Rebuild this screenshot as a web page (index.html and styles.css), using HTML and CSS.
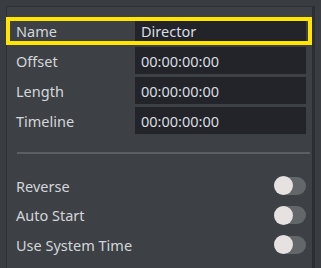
FILE: index.html
```html
<!DOCTYPE html>
<html lang="en">
<head>
    <meta charset="UTF-8">
    <title>Director Properties</title>
    <link rel="stylesheet" href="styles.css">
</head>
<body>
    <div class="panel">
        <div class="fields">
            <div class="row selected">
                <label for="name">Name</label>
                <input type="text" id="name" value="Director">
            </div>
            <div class="row">
                <label for="offset">Offset</label>
                <input type="text" id="offset" value="00:00:00:00">
            </div>
            <div class="row">
                <label for="length">Length</label>
                <input type="text" id="length" value="00:00:00:00">
            </div>
            <div class="row">
                <label for="timeline">Timeline</label>
                <input type="text" id="timeline" value="00:00:00:00">
            </div>
        </div>

        <hr class="divider">

        <div class="switches">
            <div class="switch-row">
                <span>Reverse</span>
                <span class="toggle"><span class="knob"></span></span>
            </div>
            <div class="switch-row">
                <span>Auto Start</span>
                <span class="toggle"><span class="knob"></span></span>
            </div>
            <div class="switch-row">
                <span>Use System Time</span>
                <span class="toggle"><span class="knob"></span></span>
            </div>
        </div>
    </div>
</body>
</html>
```

FILE: styles.css
```css
html, body {
    margin: 0;
    height: 100%;
    overflow: hidden;
}
body {
    font-family: "Noto Sans", "Open Sans", sans-serif;
    font-size: 14.5px;
    background-color: #393c41;
    padding: 6px 0 0 6px;
    box-sizing: border-box;
}
.panel {
    width: 309px;
    height: 100%;
    box-sizing: border-box;
    background-color: #3d4045;
    border-top: 1px solid #2d3034;
    border-left: 1px solid #2d3034;
    border-right: 3px solid #2c2e32;
    padding-top: 10px;
}
.fields {
    display: flex;
    flex-direction: column;
    gap: 3px;
    margin-left: -1px;
}
.row {
    display: flex;
    align-items: center;
    height: 27px;
    padding-right: 6px;
    color: #d3d7da;
}
.row label {
    flex: 1;
    padding-left: 10px;
}
.row input {
    width: 171px;
    height: 27px;
    box-sizing: border-box;
    border: none;
    background-color: #222429;
    color: #d9dde0;
    font: inherit;
    padding: 0 6px;
}
.row.selected {
    height: 28px;
    margin-bottom: -1px;
    outline: 4px solid #ffe500;
    outline-offset: -4px;
}
.row.selected input {
    height: 28px;
}
.divider {
    border: none;
    height: 2px;
    background-color: #5b5f62;
    margin: 18px 2px 0 10px;
}
.switches {
    display: flex;
    flex-direction: column;
    padding-top: 17px;
}
.switch-row {
    display: flex;
    align-items: center;
    justify-content: space-between;
    height: 29.5px;
    padding-left: 9px;
    padding-right: 6px;
    color: #d3d7da;
}
.toggle {
    width: 32px;
    height: 18px;
    border-radius: 9px;
    background-color: #63676a;
    display: flex;
    align-items: center;
}
.knob {
    width: 19px;
    height: 19px;
    border-radius: 50%;
    background-color: #e6e2e2;
}
```
